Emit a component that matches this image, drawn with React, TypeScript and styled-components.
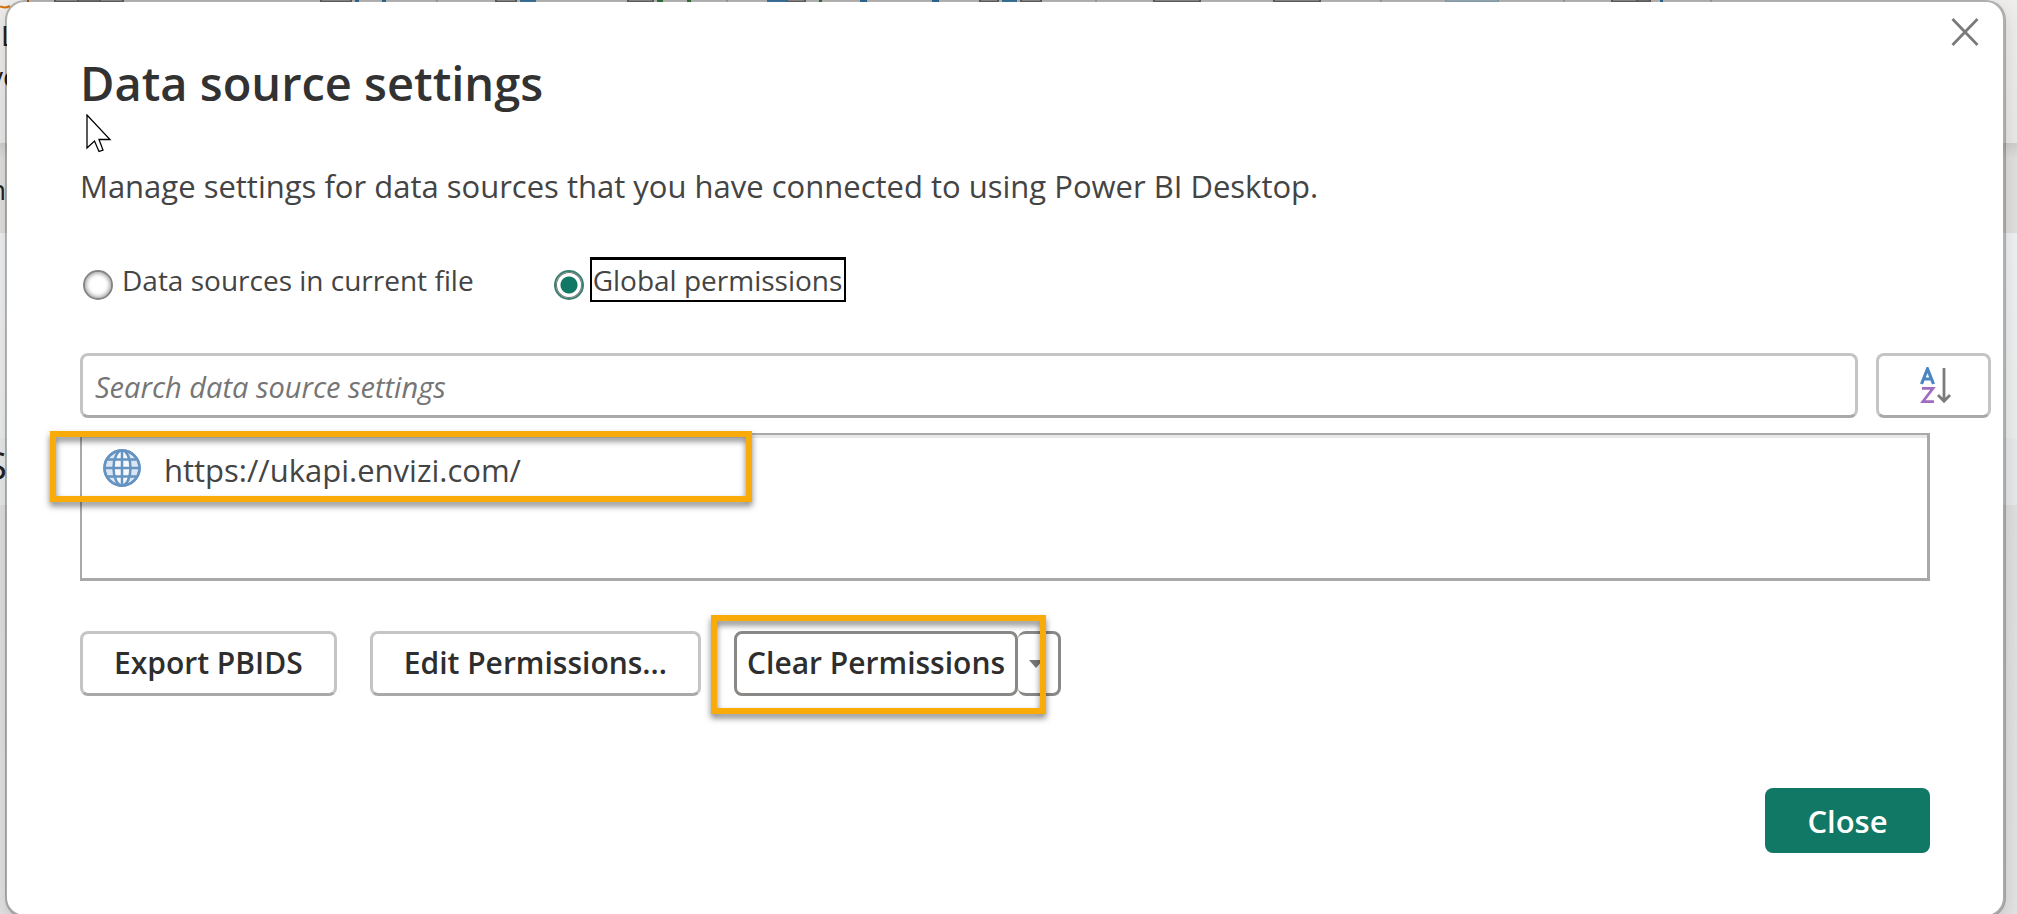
import React, { useState } from "react";
import styled, { createGlobalStyle, css } from "styled-components";

const GlobalStyle = createGlobalStyle`
  *, *::before, *::after { box-sizing: border-box; }
  html, body { margin: 0; overflow: hidden; }
  body {
    font-family: "Segoe UI", "Open Sans", "Noto Sans", sans-serif;
    color: #444;
    background: #dedede;
  }
`;

const Page = styled.div`
  position: relative;
  min-height: 100vh;
  padding: 0 11px 0 5px;
  overflow: hidden;
`;

/* Application window that stays behind the dialog */
const Backdrop = styled.div`
  position: absolute;
  inset: 0;
  display: flex;
  flex-direction: column;
  color: #222;
`;

const Band = styled.div<{ $height?: number; $from: string; $to: string }>`
  flex: ${(p) => (p.$height ? `0 0 ${p.$height}px` : "1 0 0")};
  background: linear-gradient(${(p) => p.$from}, ${(p) => p.$to});
  overflow: hidden;
`;

const RibbonEdge = styled.svg`
  display: block;
  height: 14px;
`;

const BackdropText = styled.div<{ $size: number; $line: number; $indent: number }>`
  font-size: ${(p) => p.$size}px;
  line-height: ${(p) => p.$line}px;
  text-indent: ${(p) => p.$indent}px;
  white-space: nowrap;
`;

const Dialog = styled.main`
  position: relative;
  padding: 50px 12px 62px 73px;
  border: solid rgba(0, 0, 0, 0.25);
  border-width: 2px 3px 3px 2px;
  border-radius: 20px;
  background: #fff;
  background-clip: padding-box;
  box-shadow: 0 6px 16px rgba(0, 0, 0, 0.12);
`;

const DismissButton = styled.button`
  position: absolute;
  top: 15px;
  right: 24px;
  padding: 0;
  border: 0;
  background: none;
  line-height: 0;
`;

const Pointer = styled.svg`
  position: absolute;
  top: 112px;
  left: 79px;
`;

const Title = styled.h1`
  margin: 0;
  font-size: 47px;
  line-height: 62px;
  font-weight: 600;
  color: #323232;
`;

const Description = styled.p`
  margin: 51px 0 0;
  font-size: 31px;
  line-height: 42px;
`;

const Scope = styled.div`
  display: flex;
  gap: 73px;
  margin-top: 50px;
`;

const Option = styled.label`
  display: flex;
  align-items: flex-end;
  gap: 6px;
  padding-left: 3px;
  font-size: 28px;
`;

const Radio = styled.input`
  appearance: none;
  width: 30px;
  height: 30px;
  margin: 0 0 2px;
  border: 2px solid #858585;
  border-radius: 50%;
  background: #fff;
  box-shadow: inset 0 0 4px 1px #999;
  outline: none;

  &:checked {
    border-color: #3c7f70;
    background: radial-gradient(circle, #117865 8px, #fff 9px);
    box-shadow: inset 0 0 0 1px #777;
  }
`;

const OptionText = styled.span<{ $focused: boolean }>`
  padding: 0 2px 0 1px;
  border: solid ${(p) => (p.$focused ? "#000" : "transparent")};
  border-width: 3px 2px 2px;
  line-height: 40px;
`;

const frame = css`
  height: 65px;
  border: 3px solid #c5c5c5;
  border-bottom-color: #a9a9a9;
  border-radius: 8px;
  background: #fff;
  font-family: inherit;
`;

const SearchRow = styled.div`
  display: flex;
  gap: 18px;
  margin-top: 51px;
`;

const SearchInput = styled.input`
  ${frame}
  flex: 1;
  min-width: 0;
  padding: 2px 12px 0;
  font-size: 29px;
  color: #444;

  &::placeholder {
    color: #757575;
    font-style: italic;
    opacity: 1;
  }
`;

const SortButton = styled.button`
  ${frame}
  display: flex;
  align-items: center;
  justify-content: center;
  width: 115px;
  padding: 0 0 0 4px;
`;

const SourceList = styled.ul`
  position: relative;
  min-height: 148px;
  margin: 15px 61px 0 0;
  padding: 14px 21px;
  border: solid #a9a9a9;
  border-width: 2px 3px 3px 2px;
  box-shadow: inset 0 3px 0 #e8e8e8;
  list-style: none;
`;

const Source = styled.li`
  display: flex;
  align-items: flex-start;
  gap: 23px;
  font-size: 31px;
  line-height: 42px;
`;

const Callout = styled.div<{ $top: number; $left: number; $width: number; $height: number }>`
  position: absolute;
  top: ${(p) => p.$top}px;
  left: ${(p) => p.$left}px;
  width: ${(p) => p.$width}px;
  height: ${(p) => p.$height}px;
  border: 6px solid #f9ab0a;
  filter: drop-shadow(0 4px 3px rgba(0, 0, 0, 0.5));
  pointer-events: none;
`;

const Actions = styled.div`
  display: flex;
  gap: 33px;
  margin-top: 50px;
`;

const ActionButton = styled.button<{ $focused?: boolean }>`
  ${frame}
  padding: 0 ${(p) => (p.$focused ? 10 : 31)}px 2px;
  ${(p) => p.$focused && "border-color: #8a8886;"}
  font-size: 30px;
  font-weight: 600;
  color: #2e2e2e;
  white-space: nowrap;
`;

const SplitButton = styled.div`
  position: relative;
  display: flex;
`;

const MenuButton = styled.button`
  ${frame}
  display: flex;
  align-items: center;
  justify-content: center;
  width: 43px;
  padding: 0 4px 0 0;
  border-color: #8a8886;
  border-left-width: 0;
`;

const Footer = styled.footer`
  display: flex;
  justify-content: flex-end;
  margin: 92px 61px 0 0;
`;

const CloseButton = styled.button`
  width: 165px;
  height: 65px;
  padding: 0;
  border: 0;
  border-radius: 8px;
  background: #117865;
  color: #fff;
  font-family: inherit;
  font-size: 31px;
  font-weight: 600;
`;

const separators = [437, 727, 1096, 1381, 1564, 1711];

const ribbonMarks: { x: number; w: number; color: string }[] = [
  { x: 27, w: 2, color: "#d8700a" },
  { x: 355, w: 4, color: "#3a86bd" },
  { x: 382, w: 4, color: "#3a86bd" },
  { x: 520, w: 16, color: "#4b93c5" },
  { x: 657, w: 6, color: "#3f9147" },
  { x: 687, w: 4, color: "#3f9147" },
  { x: 767, w: 20, color: "#4b93c5" },
  { x: 819, w: 3, color: "#3f9147" },
  { x: 860, w: 7, color: "#3a86bd" },
  { x: 932, w: 7, color: "#3a86bd" },
  { x: 1002, w: 15, color: "#4b93c5" },
  { x: 1660, w: 3, color: "#3a86bd" },
];

const ribbonBoxes: { x: number; w: number; color?: string }[] = [
  { x: 55, w: 68 },
  { x: 78, w: 22 },
  { x: 321, w: 30 },
  { x: 496, w: 20 },
  { x: 628, w: 25 },
  { x: 787, w: 18 },
  { x: 980, w: 18 },
  { x: 1021, w: 20 },
  { x: 1154, w: 46 },
  { x: 1274, w: 46 },
  { x: 1446, w: 52, color: "#a9cfe3" },
  { x: 1612, w: 38 },
  { x: 1637, w: 13 },
];

function RibbonIcons() {
  return (
    <RibbonEdge width="2017" height="14" viewBox="0 0 2017 14" fill="none" aria-hidden="true">
      <path d="M0 6.500Q5 8.500 10 6" stroke="#d8700a" strokeWidth="2" />
      {separators.map((x) => (
        <path key={x} d={`M${x} 0v2`} stroke="#c9c9c9" strokeWidth="2" />
      ))}
      {ribbonBoxes.map((b) => (
        <path key={b.x} d={`M${b.x} 0v1.500h${b.w}v-1.500`} stroke={b.color ?? "#777"} strokeWidth="2" />
      ))}
      {ribbonMarks.map((m) => (
        <rect key={m.x} x={m.x} width={m.w} height="2" fill={m.color} />
      ))}
    </RibbonEdge>
  );
}

function GlobeIcon() {
  return (
    <svg width="38" height="38" viewBox="0 0 38 38" fill="none" stroke="#6593c2" strokeWidth="2.500" aria-hidden="true">
      <circle cx="19" cy="19" r="17.500" fill="#dbe6f2" />
      <ellipse cx="19" cy="19" rx="8.500" ry="17.500" fill="#f5f9fd" />
      <path d="M19 1.500v35M1.500 19h35M5 10.500h28M5 27.500h28" />
      <circle cx="19" cy="19" r="17.500" />
    </svg>
  );
}

function SortIcon() {
  return (
    <svg width="32" height="38" viewBox="0 0 32 38" fill="none" aria-hidden="true">
      <path d="M1.500 17L7.500 2L13.500 17M3.500 12H11.500" stroke="#4a86c0" strokeWidth="3.200" />
      <path d="M2 21.300H13L2.800 34.700H14" stroke="#a06cc0" strokeWidth="2.700" />
      <path d="M24 1V34M18 28L24 34.300L30 28" stroke="#7d7d7d" strokeWidth="2.800" />
    </svg>
  );
}

export default function App() {
  const [scope, setScope] = useState<"file" | "global">("global");
  const [query, setQuery] = useState("");

  return (
    <>
      <GlobalStyle />
      <Page>
        <Backdrop aria-hidden="true">
          <Band $height={143} $from="#eeedec" $to="#e9e8e7">
            <RibbonIcons />
            <BackdropText $size={28} $line={42} $indent={1}>L</BackdropText>
            <BackdropText $size={28} $line={40} $indent={-11}>yo</BackdropText>
          </Band>
          <Band $height={90} $from="#cfcecd" $to="#e0dfde 16px">
            <BackdropText $size={28} $line={92} $indent={-11}>n</BackdropText>
          </Band>
          <Band $height={205} $from="#eff0f2" $to="#ebecec" />
          <Band $height={67} $from="#e7e8e9" $to="#e7e8e9">
            <BackdropText $size={38} $line={54} $indent={-14}>S</BackdropText>
          </Band>
          <Band $from="#dedede" $to="#e2e2e2" />
        </Backdrop>

        <Dialog role="dialog" aria-labelledby="dialog-title">
          <DismissButton aria-label="Dismiss">
            <svg width="28" height="30" viewBox="0 0 28 30" stroke="#7a7a7a" strokeWidth="2.800">
              <path d="M1.500 2L26.500 28M26.500 2L1.500 28" />
            </svg>
          </DismissButton>

          <Title id="dialog-title">Data source settings</Title>
          <Description>
            Manage settings for data sources that you have connected to using Power BI Desktop.
          </Description>

          <Scope role="radiogroup" aria-label="Scope">
            <Option>
              <Radio type="radio" name="scope" checked={scope === "file"} onChange={() => setScope("file")} />
              <OptionText $focused={scope === "file"}>Data sources in current file</OptionText>
            </Option>
            <Option>
              <Radio type="radio" name="scope" checked={scope === "global"} onChange={() => setScope("global")} />
              <OptionText $focused={scope === "global"}>Global permissions</OptionText>
            </Option>
          </Scope>

          <SearchRow>
            <SearchInput
              type="text"
              aria-label="Search data source settings"
              placeholder="Search data source settings"
              value={query}
              onChange={(e) => setQuery(e.target.value)}
            />
            <SortButton aria-label="Sort ascending">
              <SortIcon />
            </SortButton>
          </SearchRow>

          <SourceList>
            <Source>
              <GlobeIcon />
              https://ukapi.envizi.com/
            </Source>
            <Callout as="li" $top={-4} $left={-32} $width={702} $height={71} aria-hidden="true" />
          </SourceList>

          <Actions>
            <ActionButton>Export PBIDS</ActionButton>
            <ActionButton>Edit Permissions...</ActionButton>
            <SplitButton>
              <ActionButton $focused>Clear Permissions</ActionButton>
              <MenuButton aria-label="More clear options">
                <svg width="14" height="8" viewBox="0 0 14 8" fill="#777" aria-hidden="true">
                  <path d="M0 0H14L7 8Z" />
                </svg>
              </MenuButton>
              <Callout $top={-16} $left={-23} $width={335} $height={99} aria-hidden="true" />
            </SplitButton>
          </Actions>

          <Footer>
            <CloseButton>Close</CloseButton>
          </Footer>

          <Pointer width="28" height="40" viewBox="0 0 28 40" fill="#fff" stroke="#000" strokeWidth="1.300" aria-hidden="true">
            <path d="M1 1V34L8.500 27L13 37.500L17 36L13 25.500H24Z" />
          </Pointer>
        </Dialog>
      </Page>
    </>
  );
}
